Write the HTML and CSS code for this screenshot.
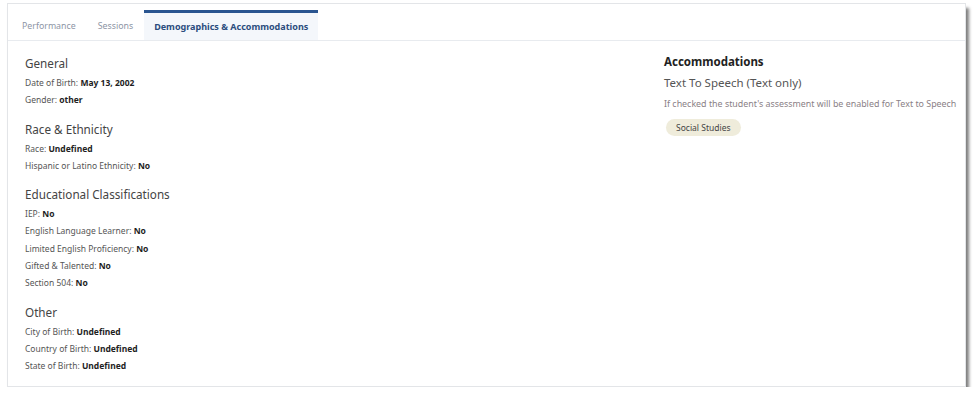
FILE: index.html
```html
<!DOCTYPE html>
<html lang="en">
<head>
  <meta charset="UTF-8" />
  <title>Student Profile</title>
  <link rel="stylesheet" href="styles.css">
</head>
<body>

  <div class="card">
    <!-- Tabs -->
    <div class="tabs">
      <div class="tab">Performance</div>
      <div class="tab">Sessions</div>
      <div class="tab active">Demographics &amp; Accommodations</div>
    </div>

    <div class="content">
      <div class="left-col">
        <h3>General</h3>
        <p>Date of Birth: <b>May 13, 2002</b></p>
        <p>Gender: <b>other</b></p>

        <h3>Race &amp; Ethnicity</h3>
        <p>Race: <b>Undefined</b></p>
        <p>Hispanic or Latino Ethnicity: <b>No</b></p>

        <h3>Educational Classifications</h3>
        <p>IEP: <b>No</b></p>
        <p>English Language Learner: <b>No</b></p>
        <p>Limited English Proficiency: <b>No</b></p>
        <p>Gifted &amp; Talented: <b>No</b></p>
        <p>Section 504: <b>No</b></p>

        <h3>Other</h3>
        <p>City of Birth: <b>Undefined</b></p>
        <p>Country of Birth: <b>Undefined</b></p>
        <p>State of Birth: <b>Undefined</b></p>
      </div>

      <div class="right-col">
        <h2>Accommodations</h2>
        <h4>Text To Speech (Text only)</h4>
        <div class="hint">If checked the student's assessment will be enabled for Text to Speech</div>
        <span class="badge">Social Studies</span>
      </div>
    </div>
  </div>

</body>
</html>
```

FILE: styles.css
```css
body {
  margin: 0;
  padding: 3px 8px 0 7px;
  background: #fff;
  font-family: 'Noto Sans', 'Open Sans', sans-serif;
  color: #555;
}

.card {
  width: 959px;
  height: 384px;
  border: 1px solid #e3e5e8;
  background: #fff;
  box-shadow: 3px 5px 3px rgba(0,0,0,0.5);
  box-sizing: border-box;
}

/* Tabs */
.tabs {
  display: flex;
  height: 36px;
  border-bottom: 1px solid #e8ebef;
  padding-left: 3px;
}

.tab {
  padding: 8px 11px 0;
  font-size: 8.8px;
  color: #8d95a5;
  display: flex;
  align-items: center;
}

.tab.active {
  margin-top: 6px;
  padding: 0 10px;
  border-top: 3px solid #2a5590;
  background: #f4f7fb;
  color: #2b4d7e;
  font-size: 9px;
  font-weight: bold;
}

/* Content */
.content {
  display: grid;
  grid-template-columns: 639px 1fr;
  padding: 14px 0 0 17px;
}

h3 {
  margin: 0 0 6px;
  font-size: 11.7px;
  font-weight: normal;
  color: #444;
}

p {
  margin: 0 0 6px;
  font-size: 8.5px;
  line-height: 11.3px;
  color: #555;
}

p b {
  color: #1e1e1e;
}

.left-col p:has(+ h3) {
  margin-bottom: 15px;
}

.right-col h2 {
  margin: -1px 0 6px;
  font-size: 11.5px;
  color: #222;
}

.right-col h4 {
  margin: 0 0 7px;
  font-size: 11.5px;
  font-weight: normal;
  color: #555;
}

.hint {
  font-size: 8.9px;
  color: #8a7f86;
  margin-bottom: 4px;
}

.badge {
  display: inline-block;
  margin-left: 2px;
  padding: 3px 10px;
  border-radius: 9px;
  background: #efecdb;
  color: #444;
  font-size: 8.5px;
}
```
